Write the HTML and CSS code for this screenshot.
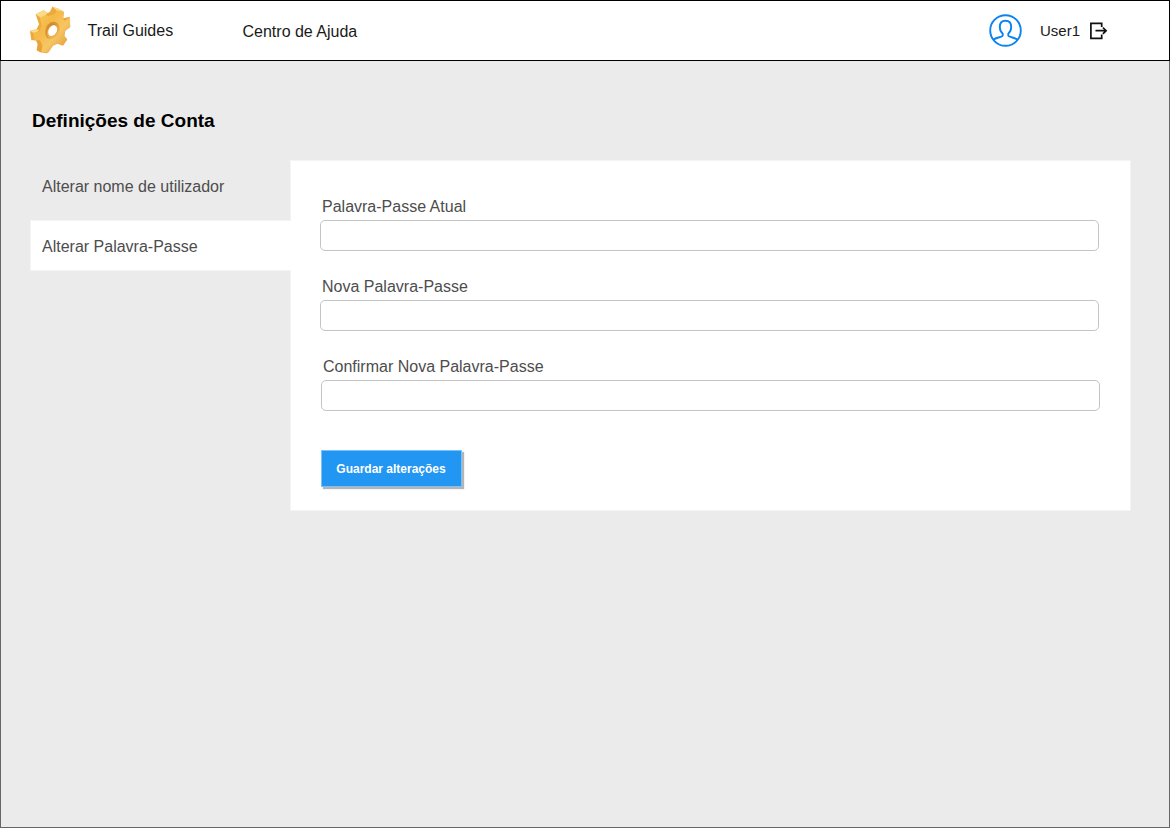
FILE: index.html
```html
<!DOCTYPE html>
<html lang="pt">
<head>
<meta charset="utf-8">
<title>Definições de Conta</title>
<link rel="stylesheet" href="styles.css">
</head>
<body>
<div class="page">
  <header class="topbar">
    <svg class="gear" viewBox="24 12 132 156" aria-hidden="true">
      <defs>
        <linearGradient id="face" x1="0" y1="0" x2="1" y2="1">
          <stop offset="0" stop-color="#fbd065"/><stop offset=".35" stop-color="#f4b948"/><stop offset=".6" stop-color="#f6c662"/><stop offset="1" stop-color="#dc9235"/>
        </linearGradient>
        <linearGradient id="hole" x1="0" y1="0" x2="1" y2="1">
          <stop offset="0" stop-color="#c9822a"/><stop offset=".5" stop-color="#e9a840"/><stop offset="1" stop-color="#f8cf78"/>
        </linearGradient>
      </defs>
      <path fill="#eda93c" d="M47 43 71 31 83 39 90 35 97 20 118 27 132 36 130 55 149 50 151 81 136 92 133 108 142 118 129 137 112 131 99 137 86 156 80 160 60 157 50 151 53 133 48 120 34 121 30 93 50 87 57 73Z"/>
      <path fill="#fcdb85" d="M47 43 71 31 83 39 77 46 62 53ZM97 20 118 27 132 36 111 32ZM30 93 50 87 58 92 42 99Z"/>
      <path fill="url(#face)" d="M60 53 76 45 86 48 104 43 110 31 132 36 128 56 134 63 150 53 150 81 136 91 132 109 141 119 129 136 113 130 98 136 84 158 64 156 67 136 59 121 43 122 41 99 58 95 65 78Z"/>
      <path fill="#e09531" d="M59 121 67 136 64 156 50 151 53 133 48 120Z" opacity=".35"/>
      <ellipse cx="97" cy="92" rx="21" ry="28" transform="rotate(24 97 92)" fill="url(#hole)"/>
      <ellipse cx="94" cy="93" rx="15" ry="24" transform="rotate(24 94 93)" fill="#bf7928" opacity=".45"/>
      <ellipse cx="97" cy="95" rx="15" ry="21" transform="rotate(24 97 95)" fill="#edb04a"/>
      <ellipse cx="98" cy="92" rx="12" ry="17" transform="rotate(28 98 92)" fill="#fff"/>
    </svg>
    <span class="brand">Trail Guides</span>
    <a class="help">Centro de Ajuda</a>
    <div class="account">
      <svg class="avatar" viewBox="0 0 34 34" aria-hidden="true">
        <circle cx="16.5" cy="16.5" r="15.3"/>
        <path d="M4.2 25.8C7.2 23.2 13.7 23.2 13.7 21.6V19.7C11.9 18.2 10.8 15.8 10.8 13.1C10.8 9.3 12.8 6.8 16.5 6.8S22.2 9.3 22.2 13.1C22.2 15.8 21.1 18.2 19.3 19.7V21.6C19.3 23.2 25.8 23.2 28.8 25.8"/>
      </svg>
      <span class="user">User1</span>
      <svg class="logout" viewBox="0 0 18 18" aria-hidden="true">
        <path d="M12.7 5V1.3H1.9V16.3H12.7V12.4M6.5 8.7H17M13.9 5.5 17.1 8.7 13.9 11.9"/>
      </svg>
    </div>
  </header>
  <main class="content">
    <h1 class="title">Definições de Conta</h1>
    <div class="settings">
      <nav class="tabs">
        <a class="tab">Alterar nome de utilizador</a>
        <a class="tab active">Alterar Palavra-Passe</a>
      </nav>
      <form class="panel">
        <label class="field">Palavra-Passe Atual<input class="input" type="password"></label>
        <label class="field">Nova Palavra-Passe<input class="input" type="password"></label>
        <label class="field last">Confirmar Nova Palavra-Passe<input class="input" type="password"></label>
        <button class="save" type="button">Guardar alterações</button>
      </form>
    </div>
  </main>
</div>
</body>
</html>
```
FILE: styles.css
```css
* { box-sizing: border-box; }
body {
  margin: 0;
  font-family: "Liberation Sans", Arial, sans-serif;
  font-size: 16px;
  line-height: 20px;
  color: #4d4d4d;
}
.page {
  height: 828px;
  background: #ebebeb;
  border: 1px solid #666;
  border-top: 0;
}
.topbar {
  display: flex;
  align-items: center;
  height: 61px;
  margin: 0 -1px;
  padding: 0 62px 0 28px;
  background: #fff;
  border: 1px solid #000;
  color: #1a1a1a;
}
.gear { width: 44px; height: 52px; margin: -1px 0 0 -1px; }
.brand { width: 155px; margin-left: 15.5px; }
.help { margin-top: 2px; }
.account { display: flex; align-items: center; margin-left: auto; }
.avatar { width: 34px; height: 34px; fill: none; stroke: #0c84f0; stroke-width: 1.9; }
.user { margin-left: 17px; font-size: 15px; }
.logout { width: 18px; height: 18px; margin-left: 9px; fill: none; stroke: #111; stroke-width: 1.7; overflow: visible; }
.content { padding: 50px 38px 0 29px; }
.title { margin: 0 0 29px 2px; font-size: 19px; line-height: 20px; color: #000; }
.settings { display: flex; align-items: flex-start; }
.tabs { width: 260px; z-index: 1; }
.tab { display: flex; align-items: center; height: 51px; padding: 2px 0 0 12px; }
.tab + .tab { margin-top: 9px; }
.active { margin-right: -1px; background: #fff; border: 1px solid #f4f4f4; border-right: 0; padding-left: 11px; }
.panel {
  width: 841px;
  height: 351px;
  padding: 36px 29px 0;
  background: #fff;
  border: 1px solid #f4f4f4;
}
.field { display: block; height: 80px; padding-left: 2px; }
.input {
  display: block;
  width: 779px;
  height: 31px;
  margin: 3px 0 0 -2px;
  border: 1px solid #c4c4c4;
  border-radius: 5px;
  background: #fff;
}
.last { margin-left: 1px; }
.save {
  display: block;
  width: 141px;
  height: 37px;
  margin: 13px 0 0 1px;
  padding: 0 1px 0 0;
  border: 1px solid #7cc0f8;
  background: #2196f3;
  box-shadow: 2px 2px 1px #b5b5b5;
  color: #fff;
  font: bold 12px "Liberation Sans", Arial, sans-serif;
}
```
